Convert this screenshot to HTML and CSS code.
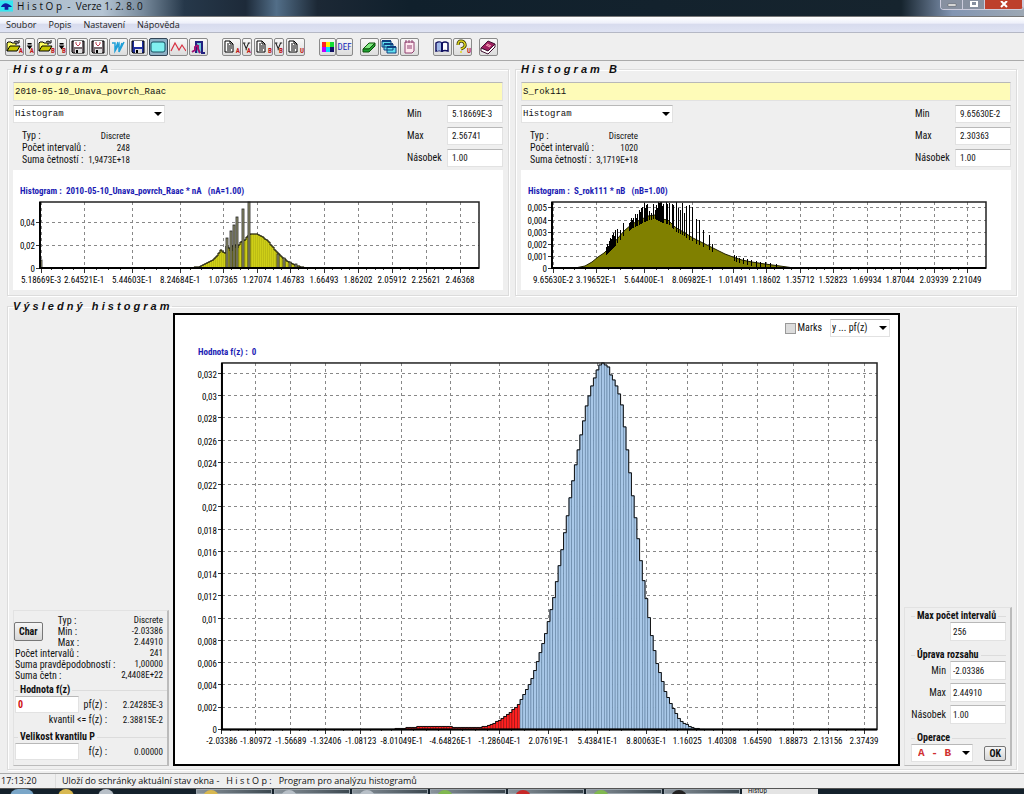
FILE: index.html
```
<!DOCTYPE html>
<html lang="cs">
<head>
  <meta charset="UTF-8">
  <meta name="viewport" content="width=device-width, initial-scale=1.0">
  <title>HistOp - Verze 1.2.8.0</title>
  <link rel="stylesheet" href="styles.css">
</head>
<body>
  <svg class="sprite" aria-hidden="true">
    <symbol id="folder" viewBox="0 0 16 16">
      <path d="M1 12V4l1-1h3l1 1h4v2" fill="#ffff60" stroke="#000"/>
      <path d="M1 12l3-5h10l-3 5z" fill="#c8c800" stroke="#000"/>
      <path d="M8 3q2-2 4 0M13 1v3h-3" fill="none" stroke="#000"/>
    </symbol>
    <symbol id="floppy" viewBox="0 0 16 16">
      <path d="M2 2h12v12H3l-1-1z" fill="currentColor" stroke="#000"/>
      <path d="M4 2h8v6H4z" fill="#fff"/>
      <path d="M5 10h7v4H5z" fill="#ddd"/>
      <path d="M6 11h2v3H6z" fill="#000"/>
    </symbol>
    <symbol id="floppy-text" viewBox="0 0 16 16">
      <path d="M2 2h12v12H3l-1-1z" fill="currentColor" stroke="#000"/>
      <path d="M4 2h8v6H4z" fill="#fff"/>
      <path d="M6 3v2l2 2 2-2V3" fill="none" stroke="#c04050"/>
      <path d="M5 10h7v4H5z" fill="#ddd"/>
      <path d="M6 11h2v3H6z" fill="#000"/>
    </symbol>
    <symbol id="page" viewBox="0 0 16 16">
      <path d="M2 2h5l3 3v8H2z" fill="#fff" stroke="#000"/>
      <path d="M7 2v3h3M4 5h2M4 7h5M4 9h5M4 11h4" fill="none" stroke="#000"/>
    </symbol>
    <symbol id="vee" viewBox="0 0 10 16">
      <path d="M1 3l3 7 3-7M0 3h3M6 3h3M4 10v2" fill="none" stroke="#222" stroke-width="1.3"/>
    </symbol>
    <symbol id="arrow" viewBox="0 0 10 16">
      <path d="M2 3h5v2H2zM1 6h7L4.500 11z" fill="#000"/>
    </symbol>
  </svg>

  <header class="titlebar">
    <svg class="app-icon" viewBox="0 0 14 12"><path d="M0 0h14v12H0z" fill="#35e5f0"/><path d="M1 7q2-4 5-4t7 4H9v3H5V7z" fill="#1020a0"/></svg>
    <span class="app-title">H i s t O p  -  Verze 1. 2. 8. 0</span>
    <div class="window-buttons">
      <button aria-label="Minimalizovat"><svg viewBox="0 0 12 8"><path d="M2 3h8v2H2z" fill="#fff" stroke="#555" stroke-width=".5"/></svg></button>
      <button aria-label="Maximalizovat"><svg viewBox="0 0 12 8"><path d="M3 0h6v5H3z" fill="none" stroke="#fff" stroke-width="2"/></svg></button>
      <button class="close" aria-label="Zavřít"><svg viewBox="0 0 12 8"><path d="M3 0l6 6M9 0L3 6" stroke="#fff" stroke-width="2"/></svg></button>
    </div>
  </header>

  <nav class="menubar">
    <a href="#">Soubor</a>
    <a href="#">Popis</a>
    <a href="#">Nastavení</a>
    <a href="#">Nápověda</a>
  </nav>

  <div class="toolbar">
    <div class="tool-group">
      <button aria-label="Otevřít A"><svg><use href="#folder"/></svg><i>A</i></button>
      <button class="slim" aria-label="Historie A"><svg><use href="#arrow"/></svg><i>A</i></button>
      <button aria-label="Otevřít B"><svg><use href="#folder"/></svg><i>B</i></button>
      <button class="slim" aria-label="Historie B"><svg><use href="#arrow"/></svg><i>B</i></button>
      <button class="floppy-grey" aria-label="Uložit"><svg><use href="#floppy-text"/></svg></button>
      <button class="floppy-grey" aria-label="Uložit výsledek"><svg><use href="#floppy-text"/></svg></button>
      <button aria-label="Graf W"><svg viewBox="0 0 16 16"><path d="M2 4h3v8l4-7v8l5-10M5 12l3-9M9 13l3-9" fill="none" stroke="#20a0d8" stroke-width="1.5"/></svg></button>
      <button class="floppy-blue" aria-label="Uložit stav"><svg><use href="#floppy"/></svg></button>
      <button class="pressed" aria-label="Do schránky"><svg viewBox="0 0 16 16"><rect x="1" y="3" width="14" height="10" rx="2" fill="#80f0f0" stroke="#145060"/></svg></button>
      <button aria-label="Křivka"><svg viewBox="0 0 16 16"><path d="M1 12l4-8 4 7 3-5 4 6" fill="none" stroke="#d83040" stroke-width="1.2"/></svg></button>
      <button aria-label="Konec"><svg viewBox="0 0 16 16"><path d="M6 14V3h6v11h3" fill="#70c8d8" stroke="#202080" stroke-width="2"/><path d="M8 6L5 8v3l-3 2M8 6v4l2 4" fill="none" stroke="#a01070" stroke-width="2"/></svg></button>
    </div>
    <div class="tool-group apart">
      <button aria-label="Popis A"><svg><use href="#page"/></svg><i>A</i></button>
      <button class="slim" aria-label="Hodnoty A"><svg><use href="#vee"/></svg><i>A</i></button>
      <button aria-label="Popis B"><svg><use href="#page"/></svg><i>B</i></button>
      <button class="slim" aria-label="Hodnoty B"><svg><use href="#vee"/></svg><i>B</i></button>
      <button aria-label="Popis V"><svg><use href="#page"/></svg><i>U</i></button>
    </div>
    <div class="tool-group joined apart">
      <button aria-label="Barvy"><svg viewBox="0 0 16 16"><path d="M2 3h4v5H2z" fill="#f22"/><path d="M2 8h4v5H2z" fill="#b0f"/><path d="M6 3h4v5H6z" fill="#fe0"/><path d="M6 8h4v5H6z" fill="#0df"/><path d="M10 3h4v5h-4z" fill="#1d3"/><path d="M10 8h4v5h-4z" fill="#116"/></svg></button>
      <button class="def">DEF</button>
    </div>
    <div class="tool-group">
      <button aria-label="Smazat"><svg viewBox="0 0 16 16"><path d="M2 10l6-6h6l-6 6z" fill="#80e880" stroke="#0a500a"/><path d="M2 10v3h6l6-6V4l-6 6z" fill="#20a030" stroke="#0a500a"/></svg></button>
      <button aria-label="Okna"><svg viewBox="0 0 16 16"><path d="M1 2h9v6H1zM3 5h9v6H3zM6 8h9v6H6z" fill="#60e0f0" stroke="#104080"/><path d="M1 2h9M3 5h9M6 8h9" stroke="#104080" stroke-width="2"/></svg></button>
      <button aria-label="Zápisník"><svg viewBox="0 0 16 16"><path d="M4 3h9v9l-2 2H4z" fill="#ffe8f0" stroke="#904070"/><path d="M5 1v3M8 1v3M11 1v3M6 7h5M6 9h5" stroke="#904070"/></svg></button>
    </div>
    <div class="tool-group apart">
      <button aria-label="Nápověda"><svg viewBox="0 0 16 16"><path d="M2 4q3-2 6 0 3-2 6 0v8q-3-1-6 0-3-1-6 0z" fill="#fff" stroke="#101060" stroke-width="1.5"/><path d="M3 4q3-1 5 0v8q-3-1-5 0z" fill="#a0b8e8"/><path d="M8 4v9" stroke="#101060" stroke-width="2"/></svg></button>
      <button aria-label="Co je to"><svg viewBox="0 0 16 16"><path d="M4 6q0-4 3-4t4 3-4 5" fill="none" stroke="#333300" stroke-width="3"/><path d="M4 6q0-4 3-4t4 3-4 5M7 12v2" fill="none" stroke="#e0d820" stroke-width="1.5"/></svg><i>U</i></button>
    </div>
    <div class="tool-group">
      <button aria-label="O programu"><svg viewBox="0 0 16 16"><path d="M1 9l7-7 7 3-7 7z" fill="#a02060" stroke="#401030"/><path d="M1 9v3l7 3 7-7V5l-7 7z" fill="#fff" stroke="#401030"/><path d="M6 6l4 2M7 5l4 2" stroke="#ffb0c0"/></svg></button>
    </div>
  </div>

  <main>
    <div class="sources">
      <fieldset class="group">
        <legend>H i s t o g r a m   A</legend>
        <input class="file-name" aria-label="Název histogramu A" value="2010-05-10_Unava_povrch_Raac">
        <div class="source-head">
          <div>
            <div class="combo combo-type"><select aria-label="Typ grafu A"><option>Histogram</option></select></div>
            <dl class="info">
              <dt>Typ :</dt><dd>Discrete</dd>
              <dt>Počet intervalů :</dt><dd>248</dd>
              <dt>Suma četností :</dt><dd>1,9473E+18</dd>
            </dl>
          </div>
          <div class="range">
            <label for="minA">Min</label><input id="minA" value="5.18669E-3">
            <label for="maxA">Max</label><input id="maxA" value="2.56741">
            <label for="nasA">Násobek</label><input id="nasA" value="1.00">
          </div>
        </div>
        <div class="chart-panel"><svg id="chartA" class="chart" viewBox="-27 -98 490 120"></svg></div>
      </fieldset>

      <fieldset class="group">
        <legend>H i s t o g r a m   B</legend>
        <input class="file-name" aria-label="Název histogramu B" value="S_rok111">
        <div class="source-head">
          <div>
            <div class="combo combo-type"><select aria-label="Typ grafu B"><option>Histogram</option></select></div>
            <dl class="info">
              <dt>Typ :</dt><dd>Discrete</dd>
              <dt>Počet intervalů :</dt><dd>1020</dd>
              <dt>Suma četností :</dt><dd>3,1719E+18</dd>
            </dl>
          </div>
          <div class="range">
            <label for="minB">Min</label><input id="minB" value="9.65630E-2">
            <label for="maxB">Max</label><input id="maxB" value="2.30363">
            <label for="nasB">Násobek</label><input id="nasB" value="1.00">
          </div>
        </div>
        <div class="chart-panel"><svg id="chartB" class="chart" viewBox="-31 -98 490 120"></svg></div>
      </fieldset>
    </div>

    <fieldset class="group result">
      <legend>V ý s l e d n ý   h i s t o g r a m</legend>
      <div class="result-grid">
        <section class="side side-left">
          <div class="char-row">
            <button class="push">Char</button>
            <dl class="stats">
              <dt>Typ :</dt><dd>Discrete</dd>
              <dt>Min :</dt><dd>-2.03386</dd>
              <dt>Max :</dt><dd>2.44910</dd>
            </dl>
          </div>
          <dl class="stats totals">
            <dt>Počet intervalů :</dt><dd>241</dd>
            <dt>Suma pravděpodobností :</dt><dd>1,00000</dd>
            <dt>Suma četn :</dt><dd>2,4408E+22</dd>
          </dl>
          <fieldset class="subgroup">
            <legend>Hodnota f(z)</legend>
            <div class="value-row">
              <input class="value-red" aria-label="Hodnota f(z)" value="0"><span>pf(z) :</span><output>2.24285E-3</output>
            </div>
            <div class="value-row"><span>kvantil &lt;= f(z) :</span><output>2.38815E-2</output></div>
          </fieldset>
          <fieldset class="subgroup">
            <legend>Velikost kvantilu P</legend>
            <div class="value-row">
              <input aria-label="Velikost kvantilu P"><span>f(z) :</span><output>0.00000</output>
            </div>
          </fieldset>
        </section>

        <section class="result-chart">
          <div class="chart-options">
            <label class="marks"><input type="checkbox"> Marks</label>
            <div class="combo combo-axis"><select aria-label="Osa y"><option>y ... pf(z)</option></select></div>
          </div>
          <svg id="chartResult" class="chart" viewBox="-47 -390 724 425"></svg>
        </section>

        <section class="side side-right">
          <fieldset class="subgroup">
            <legend>Max počet intervalů</legend>
            <div class="field-row"><input aria-label="Max počet intervalů" value="256"></div>
          </fieldset>
          <fieldset class="subgroup">
            <legend>Úprava rozsahu</legend>
            <div class="field-row"><label for="minV">Min</label><input id="minV" value="-2.03386"></div>
            <div class="field-row"><label for="maxV">Max</label><input id="maxV" value="2.44910"></div>
            <div class="field-row"><label for="nasV">Násobek</label><input id="nasV" value="1.00"></div>
          </fieldset>
          <fieldset class="subgroup">
            <legend>Operace</legend>
            <div class="operation">
              <div class="combo combo-op"><select aria-label="Operace"><option>A - B</option></select></div>
              <button class="push">OK</button>
            </div>
          </fieldset>
        </section>
      </div>
    </fieldset>
  </main>

  <footer class="statusbar">
    <span class="clock">17:13:20</span>
    <span class="message">Uloží do schránky aktuální stav okna -   H i s t O p :   Program pro analýzu histogramů</span>
  </footer>
  <div class="taskbar">
    <div class="pins"><b class="orb"></b><b class="pin gold"></b><b class="pin"></b></div>
    <div class="task"><b class="pin gold"></b></div>
    <div class="task"><b class="pin"></b></div>
    <div class="task"><b class="pin"></b></div>
    <div class="task"><b class="pin green"></b></div>
    <div class="task"><b class="pin red"></b></div>
    <div class="task"><b class="pin green"></b></div>
    <div class="task"><b class="pin dark"></b></div>
    <div class="task active">HistOp</div>
  </div>

  <script src="charts.js"></script>
</body>
</html>
```
FILE: styles.css
```
/* HistOp main window */
* {
  box-sizing: border-box;
}

body {
  margin: 0;
  min-height: 100vh;
  display: flex;
  flex-direction: column;
  background: #efefef;
  color: #111;
  font-family: "Roboto Condensed", "Liberation Sans", Arial, sans-serif;
  font-size: 10px;
  line-height: 12px;
}

button,
input,
select {
  font: inherit;
  color: inherit;
  margin: 0;
}

fieldset,
dl,
dd {
  margin: 0;
  padding: 0;
  min-width: 0;
}

.sprite {
  display: none;
}

/* title bar */
.titlebar {
  display: flex;
  height: 17px;
  overflow: hidden;
  background: linear-gradient(90deg, #a9b9c6 0, #b5c5d4 10%, #76899b 14%, #26384a 18%, #1d2a39 24%, #526e88 27%, #1c2835 31%, #10202c 40%, #16242e 88%, #8295b2 93%, #9da8b4);
  border-bottom: 1px solid #777;
}

.app-icon {
  width: 13px;
  height: 12px;
}

.app-title {
  flex: 1;
  padding-left: 4px;
  font-family: "Open Sans", "Noto Sans", sans-serif;
  white-space: pre;
}

.window-buttons {
  display: flex;
  height: 10px;
  border: 1px solid #ccd;
  border-top: 0;
  border-radius: 0 0 4px 4px;
  overflow: hidden;
}

.window-buttons button {
  width: 22px;
  padding: 0;
  border: 0;
  border-right: 1px solid #ccd;
  background: #8790a0;
}

.window-buttons .close {
  width: 38px;
  background: #bd3f2c;
}

.window-buttons svg {
  display: block;
  width: 12px;
  height: 8px;
  margin: 0 auto;
}

/* menu */
.menubar {
  display: flex;
  gap: 12px;
  height: 16px;
  padding: 1px 6px;
  background: linear-gradient(#fff 0, #eef0fa 40%, #d8dcee 50%, #dfe3f3);
  border-bottom: 1px solid #b5b8c5;
  font-family: "Open Sans", "Noto Sans", sans-serif;
  font-size: 9px;
  line-height: 14px;
}

.menubar a {
  color: #222;
  text-decoration: none;
}

/* toolbar */
.toolbar {
  display: flex;
  gap: 7px;
  height: 28px;
  padding: 5px;
  border-bottom: 1px solid #aaa;
}

.tool-group {
  display: flex;
  gap: 1px;
}

.tool-group.apart {
  margin-left: 7px;
}

.tool-group.joined {
  gap: 0;
}

.toolbar button {
  position: relative;
  width: 19px;
  height: 18px;
  padding: 0;
  border: 1px solid #8a8a8a;
  border-radius: 2px;
  background: linear-gradient(#f8f8f8, #dcdcdc);
}

.toolbar button.slim {
  width: 10px;
  margin-right: 1px;
}

.toolbar .joined button {
  width: 17px;
}

.toolbar button.pressed {
  background: #8eb0c4;
  border-color: #345;
}

.toolbar button.def {
  color: #1428b8;
  font-size: 9px;
}

.toolbar svg {
  display: block;
  width: 16px;
  height: 16px;
}

.toolbar .slim svg {
  width: 8px;
}

/* small letter that tells which histogram the tool works on */
.toolbar i {
  position: absolute;
  right: 0;
  bottom: 0;
  color: #c01818;
  font-size: 7px;
  font-style: normal;
  font-weight: bold;
  line-height: 7px;
}

.toolbar .floppy-grey {
  color: #776a70;
}

.toolbar .floppy-blue {
  color: #2030a0;
}

/* groups */
main {
  flex: 1;
  display: flex;
  flex-direction: column;
  gap: 4px;
  padding: 2px 7px 3px;
}

.sources {
  display: grid;
  grid-template-columns: 1fr 1fr;
  gap: 6px;
}

.group {
  border: 1px solid #dcdcdc;
  box-shadow: inset 1px 1px #fff, 1px 1px #fff;
  padding: 7px 5px 5px;
}

.group > legend {
  height: 12px;
  padding: 0 2px 0 0;
  font-family: "Liberation Sans", Arial, sans-serif;
  font-size: 11px;
  font-weight: bold;
  font-style: italic;
  white-space: pre;
}

input,
select {
  border: 1px solid #e2e2e2;
  border-top-color: #b8b8b8;
  background: #fff;
  border-radius: 0;
  outline: 0;
}

.file-name {
  display: block;
  width: 100%;
  height: 19px;
  padding: 0 1px;
  background: #fefbb8;
  font-family: "Liberation Mono", monospace;
  font-size: 9px;
}

.source-head {
  display: flex;
  justify-content: space-between;
  padding: 4px 0 3px;
}

.combo {
  position: relative;
}

.combo select {
  appearance: none;
  display: block;
  width: 100%;
  height: 18px;
  padding: 0 1px;
}

.combo::after {
  content: '';
  position: absolute;
  right: 3px;
  top: 7px;
  border: 4px solid transparent;
  border-top-color: #000;
  border-bottom: 0;
  pointer-events: none;
}

.combo-type {
  width: 152px;
  font-family: "Liberation Mono", monospace;
  font-size: 9px;
}

.info {
  display: grid;
  grid-template-columns: 1fr auto;
  width: 117px;
  padding: 7px 0 0 9px;
  white-space: nowrap;
}

.info dd,
.stats dd {
  text-align: right;
  font-size: 9px;
}

.range {
  display: grid;
  grid-template-columns: 40px 56px;
  gap: 4px 0;
  align-items: center;
}

.range input {
  width: 56px;
  height: 18px;
  padding: 0 4px;
  font-size: 9px;
}

.chart-panel {
  background: #fff;
}

/* charts */
.chart {
  display: block;
  width: 100%;
  height: auto;
  font-size: 9px;
}

.chart .title {
  fill: #1c1cb4;
  font-weight: bold;
  white-space: pre;
}

.chart .grid {
  stroke: #888;
  stroke-dasharray: 3 3;
  shape-rendering: crispEdges;
}

.chart .tick {
  stroke: #333;
  shape-rendering: crispEdges;
}

.chart .frame {
  fill: none;
  stroke: #222;
  stroke-width: 1.5;
}

.chart .axis {
  fill: none;
  stroke: #000;
  stroke-width: 2;
}

.chart .outline {
  fill: none;
  stroke: #111;
}

.bar-yellow {
  fill: #e6e61c;
  stroke: #88880a;
  stroke-width: .5;
}

.bar-grey {
  fill: #a0a078;
  stroke: #222;
  stroke-width: .8;
}

.bar-blue {
  fill: #a9c8e8;
  stroke: #5f7f9f;
  stroke-width: .6;
}

.bar-red {
  fill: #ff2020;
  stroke: #8a1010;
  stroke-width: .6;
}

.area-olive {
  fill: #808000;
  stroke: #222200;
}

.spike {
  stroke: #000;
  shape-rendering: crispEdges;
}

/* result */
.result {
  flex: 1;
  display: flex;
  padding: 1px 4px 3px 5px;
}

.result-grid {
  flex: 1;
  display: grid;
  grid-template-columns: 156px 1fr 108px;
  gap: 4px;
  align-items: end;
}

.result-chart {
  align-self: stretch;
  border: 2px solid #000;
  background: #fff;
}

.chart-options {
  display: flex;
  justify-content: flex-end;
  gap: 8px;
  padding: 4px 8px 3px;
}

.marks {
  display: flex;
  align-items: center;
  gap: 2px;
}

.marks input {
  appearance: none;
  width: 11px;
  height: 11px;
  border: 1px solid #999;
  background: #dcdcdc;
}

.marks input:checked {
  background: #446;
}

.combo-axis {
  width: 60px;
}

.side {
  border: 1px solid #e2e2e2;
  border-right: 2px solid #bbb;
  border-bottom-color: #bbb;
  white-space: nowrap;
}

.side-left {
  padding-top: 4px;
}

.char-row {
  display: flex;
  align-items: center;
  gap: 14px;
}

.push {
  height: 19px;
  padding: 0 4px;
  border: 1px solid #777;
  border-radius: 2px;
  background: linear-gradient(#f6f6f6, #d6d6d6);
  font-weight: bold;
}

.stats {
  flex: 1;
  display: grid;
  grid-template-columns: 1fr auto;
  line-height: 11px;
  padding: 0 4px 0 1px;
}

.totals {
  padding-bottom: 3px;
}

.subgroup {
  border: 1px solid #dcdcdc;
  border-width: 1px 0 0;
}

.subgroup legend {
  margin-left: 4px;
  padding: 0 2px;
  font-weight: bold;
}

.value-row {
  display: flex;
  align-items: center;
  justify-content: flex-end;
  min-height: 13px;
  padding: 0 4px 0 1px;
}

.value-row input {
  width: 64px;
  height: 17px;
  margin-right: auto;
}

.value-row output {
  width: 56px;
  text-align: right;
  font-size: 9px;
}

.value-row .value-red {
  color: #d01010;
  font-weight: bold;
}

.side-left .subgroup {
  padding-bottom: 5px;
}

.side-right .subgroup {
  margin: 2px 4px 0 6px;
  padding-bottom: 3px;
}

.field-row {
  display: flex;
  align-items: center;
  justify-content: flex-end;
  gap: 4px;
  padding-bottom: 3px;
}

.field-row input {
  width: 56px;
  height: 19px;
  padding: 0 2px;
  font-size: 9px;
}

.operation {
  display: flex;
  align-items: center;
  justify-content: space-between;
}

.combo-op {
  width: 62px;
  color: #d03030;
  font-family: "Liberation Mono", monospace;
  font-size: 11px;
  font-weight: bold;
}

.combo-op select {
  padding-left: 6px;
}

.operation .push {
  height: 15px;
  line-height: 11px;
}

/* status bar */
.statusbar {
  display: flex;
  height: 15px;
  border-top: 1px solid #aaa;
  font-family: "Open Sans", "Noto Sans", sans-serif;
  font-size: 9px;
  line-height: 14px;
  white-space: pre;
}

.clock {
  width: 56px;
  padding-left: 1px;
  border-right: 1px solid #ddd;
}

.message {
  padding-left: 6px;
}

.taskbar {
  display: flex;
  gap: 2px;
  height: 6px;
  overflow: hidden;
  background: #14212b;
  border-top: 1px solid #555;
}

.pins {
  display: flex;
  gap: 24px;
  width: 194px;
  padding-left: 10px;
}

.orb,
.pin {
  width: 16px;
  height: 16px;
  border-radius: 8px;
  background: #b8c0c8;
}

.orb {
  width: 24px;
  background: #7aa6c8;
}

.gold {
  background: #d8b850;
}

.green {
  background: #80b850;
}

.red {
  background: #c82828;
}

.dark {
  background: #222;
}

.task {
  width: 76px;
  padding-left: 6px;
  background: linear-gradient(90deg, #8a949c, #3c4850);
  border: 1px solid #9aa4ac;
}

.task .pin {
  display: block;
}

.task.active {
  border-width: 0;
  background: #e4e4e4;
  font-size: 7px;
  line-height: 5px;
}
```
FILE: charts.js
```
// Draws the three histograms. The origin of every chart is the lower left
// corner of its plot, heights are given upwards.

function el(svg, name, attrs, text) {
  const node = document.createElementNS("http://www.w3.org/2000/svg", name);
  for (const key in attrs) node.setAttribute(key, attrs[key]);
  if (text !== undefined) node.textContent = text;
  svg.appendChild(node);
}

// Linear interpolation in a list of [x, height]
function heightAt(points, x) {
  for (let i = 1; i < points.length; i++) {
    const [x0, h0] = points[i - 1];
    const [x1, h1] = points[i];
    if (x >= x0 && x <= x1) return h0 + (h1 - h0) * (x - x0) / (x1 - x0);
  }
  return 0;
}

function drawGrid(svg, c) {
  el(svg, "text", { x: c.titleX, y: -c.height - 8, class: "title" }, c.title);
  c.yTicks.forEach(([h, label]) => {
    if (h > 0) el(svg, "line", { x1: 0, x2: c.width, y1: -h, y2: -h, class: "grid" });
    el(svg, "line", { x1: -4, x2: 0, y1: -h, y2: -h, class: "tick" });
    el(svg, "text", { x: -5, y: -h + 4, "text-anchor": "end" }, label);
  });
  c.xTicks.forEach(([x, label], i) => {
    if (x > 0) el(svg, "line", { x1: x, x2: x, y1: -c.height, y2: 0, class: "grid" });
    el(svg, "line", { x1: x, x2: x, y1: 0, y2: 5, class: "tick" });
    el(svg, "text", { x: x, y: 15, "text-anchor": "middle" }, label);
    const next = i + 1 < c.xTicks.length ? c.xTicks[i + 1][0] : x;
    for (let k = 1; k < 4; k++) {
      const m = x + (next - x) * k / 4;
      el(svg, "line", { x1: m, x2: m, y1: 0, y2: 2, class: "tick" });
    }
  });
}

function drawFrame(svg, c) {
  el(svg, "rect", { x: 0, y: -c.height, width: c.width, height: c.height, class: "frame" });
  el(svg, "path", { d: `M0 ${-c.height}V0H${c.width}`, class: "axis" });
}

function drawBars(svg, points, step, classOf) {
  const first = points[0][0];
  const last = points[points.length - 1][0];
  let outline = `M${first} 0`;
  for (let x = first; x < last; x += step) {
    const h = Math.round(heightAt(points, x + step / 2));
    if (h > 0) el(svg, "rect", { x: x, y: -h, width: step, height: h, class: classOf(x) });
    outline += `V${-h}H${x + step}`;
  }
  el(svg, "path", { d: outline, class: "outline" });
}

// Histogram A
const a = {
  width: 439, height: 66, titleX: -20,
  title: "Histogram :  2010-05-10_Unava_povrch_Raac * nA   (nA=1.00)",
  yTicks: [[0, "0"], [23, "0,02"], [46, "0,04"]],
  xTicks: [[1, "5.18669E-3"], [44, "2.64521E-1"], [92, "5.44603E-1"], [140, "8.24684E-1"],
    [183, "1.07365"], [217, "1.27074"], [250, "1.46783"], [284, "1.66493"],
    [318, "1.86202"], [352, "2.05912"], [386, "2.25621"], [420, "2.46368"]]
};
const svgA = document.getElementById("chartA");
drawGrid(svgA, a);
drawBars(svgA, [[150, 0], [160, 1], [164, 3], [166, 5], [172, 7], [177, 12], [182, 20],
  [184, 12], [187, 22], [191, 17], [194, 24], [197, 20], [201, 26], [205, 28], [208, 32],
  [212, 34], [218, 34], [223, 31], [229, 26], [235, 18], [240, 13], [247, 7], [253, 4],
  [258, 2], [265, 0]], 2, () => "bar-yellow");
[[1, 8], [187, 30], [191, 37], [194, 43], [197, 51], [203, 59], [209, 66],
  [238, 14], [244, 10], [250, 6], [256, 4]].forEach(([x, h]) => {
  el(svgA, "rect", { x: x - 1, y: -h, width: 2, height: h, class: "bar-grey" });
});
drawFrame(svgA, a);

// Histogram B
const b = {
  width: 434, height: 66, titleX: -24,
  title: "Histogram :  S_rok111 * nB   (nB=1.00)",
  yTicks: [[0, "0"], [12, "0,001"], [24, "0,002"], [36, "0,003"], [48, "0,004"], [61, "0,005"]],
  xTicks: [[1, "9.65630E-2"], [44, "3.19652E-1"], [92, "5.64400E-1"], [140, "8.06982E-1"],
    [181, "1.01491"], [214, "1.18602"], [248, "1.35712"], [281, "1.52823"],
    [315, "1.69934"], [348, "1.87044"], [382, "2.03939"], [415, "2.21049"]]
};
const svgB = document.getElementById("chartB");
drawGrid(svgB, b);
const envelopeB = [[23, 0], [33, 2], [40, 6], [46, 11], [52, 15], [60, 23], [66, 30], [72, 37],
  [80, 44], [88, 48], [96, 52], [103, 53], [110, 49], [116, 48], [123, 41], [133, 35],
  [141, 30], [153, 24], [163, 19], [173, 14], [181, 11], [190, 8], [200, 6], [213, 4],
  [228, 2], [242, 0]];
el(svgB, "path", { d: "M23 0" + envelopeB.map(([x, h]) => `L${x} ${-h}`).join("") + "Z", class: "area-olive" });
[[54, 21], [55, 24], [56, 22], [57, 27], [58, 30], [59, 29], [60, 33], [61, 35], [62, 32],
  [63, 38], [65, 39], [68, 38], [71, 45], [77, 45], [78, 46], [79, 50], [80, 48], [81, 50],
  [83, 54], [84, 50], [85, 54], [87, 58], [88, 56], [89, 60], [90, 61], [92, 65], [93, 60],
  [94, 63], [95, 64], [97, 57], [99, 55], [101, 64], [103, 58], [104, 63], [105, 60],
  [106, 66], [107, 65], [108, 66], [109, 66], [110, 62], [111, 64], [114, 66], [115, 64],
  [117, 65], [120, 64], [121, 63], [124, 66], [126, 60], [128, 58],
  [130, 65], [132, 55], [134, 62], [137, 63], [140, 61], [144, 49], [147, 48],
  [151, 38], [157, 33], [160, 24], [182, 13], [184, 12], [187, 10], [191, 10], [195, 9],
  [199, 8], [204, 7], [208, 6], [213, 6], [218, 5], [224, 4]].forEach(([x, h]) => {
  const low = Math.max(0, heightAt(envelopeB, x) - 4);
  el(svgB, "line", { x1: x, x2: x, y1: -low, y2: -h, class: "spike" });
});
drawFrame(svgB, b);

// Resulting histogram, values below zero are red
const r = {
  width: 656, height: 367, titleX: -24,
  title: "Hodnota f(z) :  0",
  yTicks: [],
  xTicks: [[0, "-2.03386"], [34, "-1.80972"], [69, "-1.56689"], [104, "-1.32406"],
    [139, "-1.08123"], [180, "-8.01049E-1"], [229, "-4.64826E-1"], [278, "-1.28604E-1"],
    [327, "2.07619E-1"], [376, "5.43841E-1"], [425, "8.80063E-1"], [466, "1.16025"],
    [501, "1.40308"], [536, "1.64590"], [572, "1.88873"], [607, "2.13156"], [643, "2.37439"]]
};
for (let k = 0; k <= 16; k++) {
  r.yTicks.push([Math.round(k * 22.25), String(k * 2 / 1000).replace(".", ",")]);
}
const svgR = document.getElementById("chartResult");
drawGrid(svgR, r);
drawBars(svgR, [[168, 0], [180, 1], [190, 2], [200, 3], [225, 3], [235, 2], [258, 2],
  [268, 4], [278, 9], [288, 16], [297, 25], [310, 48], [323, 90], [333, 134], [343, 194],
  [353, 258], [365, 323], [371, 345], [374, 354], [378, 365], [382, 367], [387, 363],
  [390, 354], [394, 347], [398, 336], [401, 323], [411, 237], [421, 158], [431, 90],
  [436, 66], [445, 35], [458, 10], [468, 3], [475, 1], [482, 0]], 2.72,
  x => x < 296 ? "bar-red" : "bar-blue");
drawFrame(svgR, r);
```
